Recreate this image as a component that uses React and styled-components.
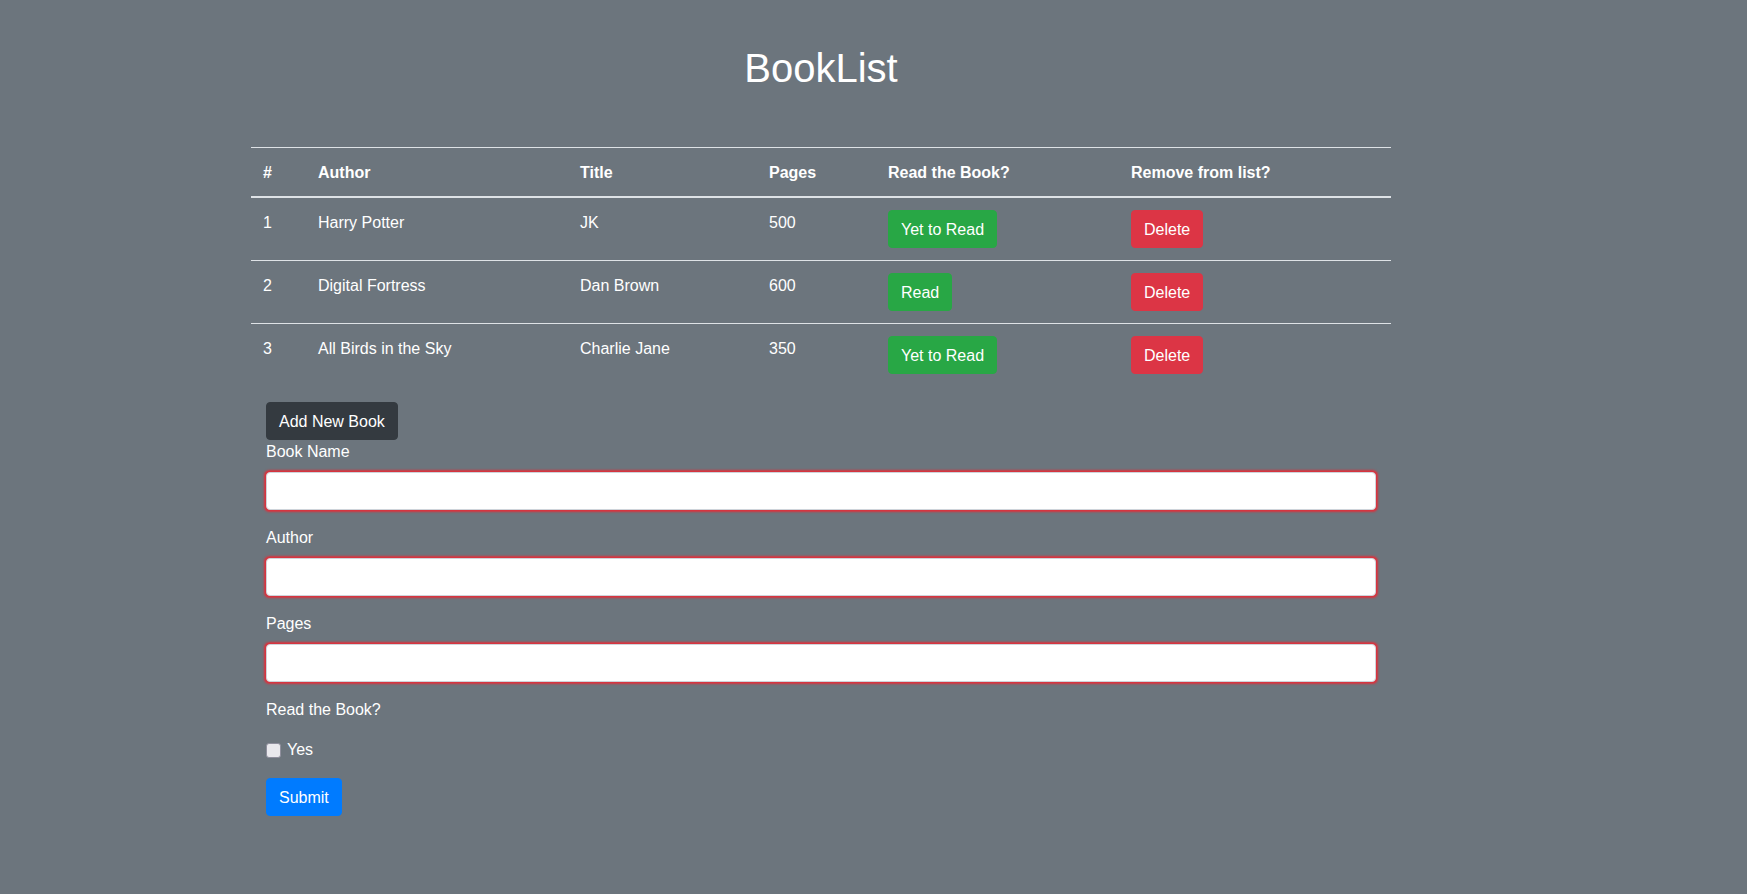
import { useState } from "react"
import styled, { createGlobalStyle } from "styled-components"

const GlobalStyle = createGlobalStyle`
    html, body {
        margin: 0;
        min-height: 100%;
        background-color: #6c757d;
    }
    body {
        font-family: "Liberation Sans", Arial, sans-serif;
        font-size: 16px;
        line-height: 1.5;
        color: #fff;
    }
    * {
        box-sizing: border-box;
    }
`

const Wrapper = styled.div`
    width: 1140px;
    margin-left: 251px;
    padding-bottom: 20px;
`

const Title = styled.h1`
    margin: 44px 0 55px 0;
    font-size: 40px;
    font-weight: 400;
    line-height: 1.2;
    text-align: center;
    color: #fff;
`

const Table = styled.table`
    width: 100%;
    border-collapse: collapse;
    margin-bottom: 16px;
    color: #fff;
    & th, & td {
        padding: 13px 12px 11px 12px;
        text-align: left;
        vertical-align: top;
        border-top: 1px solid #dee2e6;
    }
    & th {
        font-weight: 700;
        vertical-align: bottom;
        border-bottom: 2px solid #dee2e6;
    }
    & td.btn-cell {
        padding: 12px;
    }
`

const Col = styled.col`
    width: ${props => props.$w}px;
`

const Button = styled.button`
    display: inline-block;
    font-family: inherit;
    font-size: 16px;
    line-height: 24px;
    padding: 7px 12px 5px 12px;
    border: 1px solid ${props => props.$color};
    border-radius: 4px;
    background-color: ${props => props.$color};
    color: #fff;
    cursor: pointer;
`

const FormWrapper = styled.div`
    padding: 0 15px;
`

const FormGroup = styled.div`
    margin-bottom: 16px;
`

const Label = styled.label`
    display: inline-block;
    margin-bottom: 8px;
`

const Input = styled.input`
    display: block;
    width: 100%;
    height: 38px;
    padding: 6px 12px;
    font-family: inherit;
    font-size: 16px;
    border: 1px solid #ced4da;
    border-radius: 4px;
    background-color: #fff;
    box-shadow: 0 0 0 1px #d7343f, 0 0 2px 1.5px #d7343f;
    outline: none;
`

const PlainLabel = styled.div`
    margin-bottom: 16px;
`

const CheckRow = styled.div`
    display: flex;
    align-items: center;
    gap: 6px;
    margin-bottom: 16px;
    height: 24px;
`

const Checkbox = styled.input`
    appearance: none;
    margin: 0;
    width: 15px;
    min-width: 15px;
    height: 15px;
    border: 1px solid #8f8f9d;
    border-radius: 3px;
    background-color: #e9e9ed;
    &:checked {
        background-color: #007bff;
    }
`

const books = [
    { id: 1, author: "Harry Potter", title: "JK", pages: 500, read: false },
    { id: 2, author: "Digital Fortress", title: "Dan Brown", pages: 600, read: true },
    { id: 3, author: "All Birds in the Sky", title: "Charlie Jane", pages: 350, read: false },
]

export default function App(){
    const [list, setList] = useState(books)
    const [checked, setChecked] = useState(false)

    return <>
        <GlobalStyle />
        <Wrapper>
            <Title>BookList</Title>
            <Table>
                <colgroup>
                    <Col $w={55} />
                    <Col $w={262} />
                    <Col $w={189} />
                    <Col $w={119} />
                    <Col $w={243} />
                    <Col $w={272} />
                </colgroup>
                <thead>
                    <tr>
                        <th>#</th>
                        <th>Author</th>
                        <th>Title</th>
                        <th>Pages</th>
                        <th>Read the Book?</th>
                        <th>Remove from list?</th>
                    </tr>
                </thead>
                <tbody>
                    {list.map((book, i) => (
                        <tr key={book.id}>
                            <td>{i + 1}</td>
                            <td>{book.author}</td>
                            <td>{book.title}</td>
                            <td>{book.pages}</td>
                            <td className="btn-cell">
                                <Button $color="#28a745" onClick={()=>{
                                    setList(list.map(b => b.id === book.id ? {...b, read: !b.read} : b))
                                }}>
                                    {book.read ? "Read" : "Yet to Read"}
                                </Button>
                            </td>
                            <td className="btn-cell">
                                <Button $color="#dc3545" onClick={()=>{
                                    setList(list.filter(b => b.id !== book.id))
                                }}>
                                    Delete
                                </Button>
                            </td>
                        </tr>
                    ))}
                </tbody>
            </Table>
            <FormWrapper>
                <Button $color="#343a40">Add New Book</Button>
                <FormGroup>
                    <Label>Book Name</Label>
                    <Input type="text" />
                </FormGroup>
                <FormGroup>
                    <Label>Author</Label>
                    <Input type="text" />
                </FormGroup>
                <FormGroup>
                    <Label>Pages</Label>
                    <Input type="text" />
                </FormGroup>
                <PlainLabel>Read the Book?</PlainLabel>
                <CheckRow>
                    <Checkbox type="checkbox" checked={checked} onChange={(e)=>{setChecked(e.target.checked)}} />
                    <span>Yes</span>
                </CheckRow>
                <Button $color="#007bff">Submit</Button>
            </FormWrapper>
        </Wrapper>
    </>
}
